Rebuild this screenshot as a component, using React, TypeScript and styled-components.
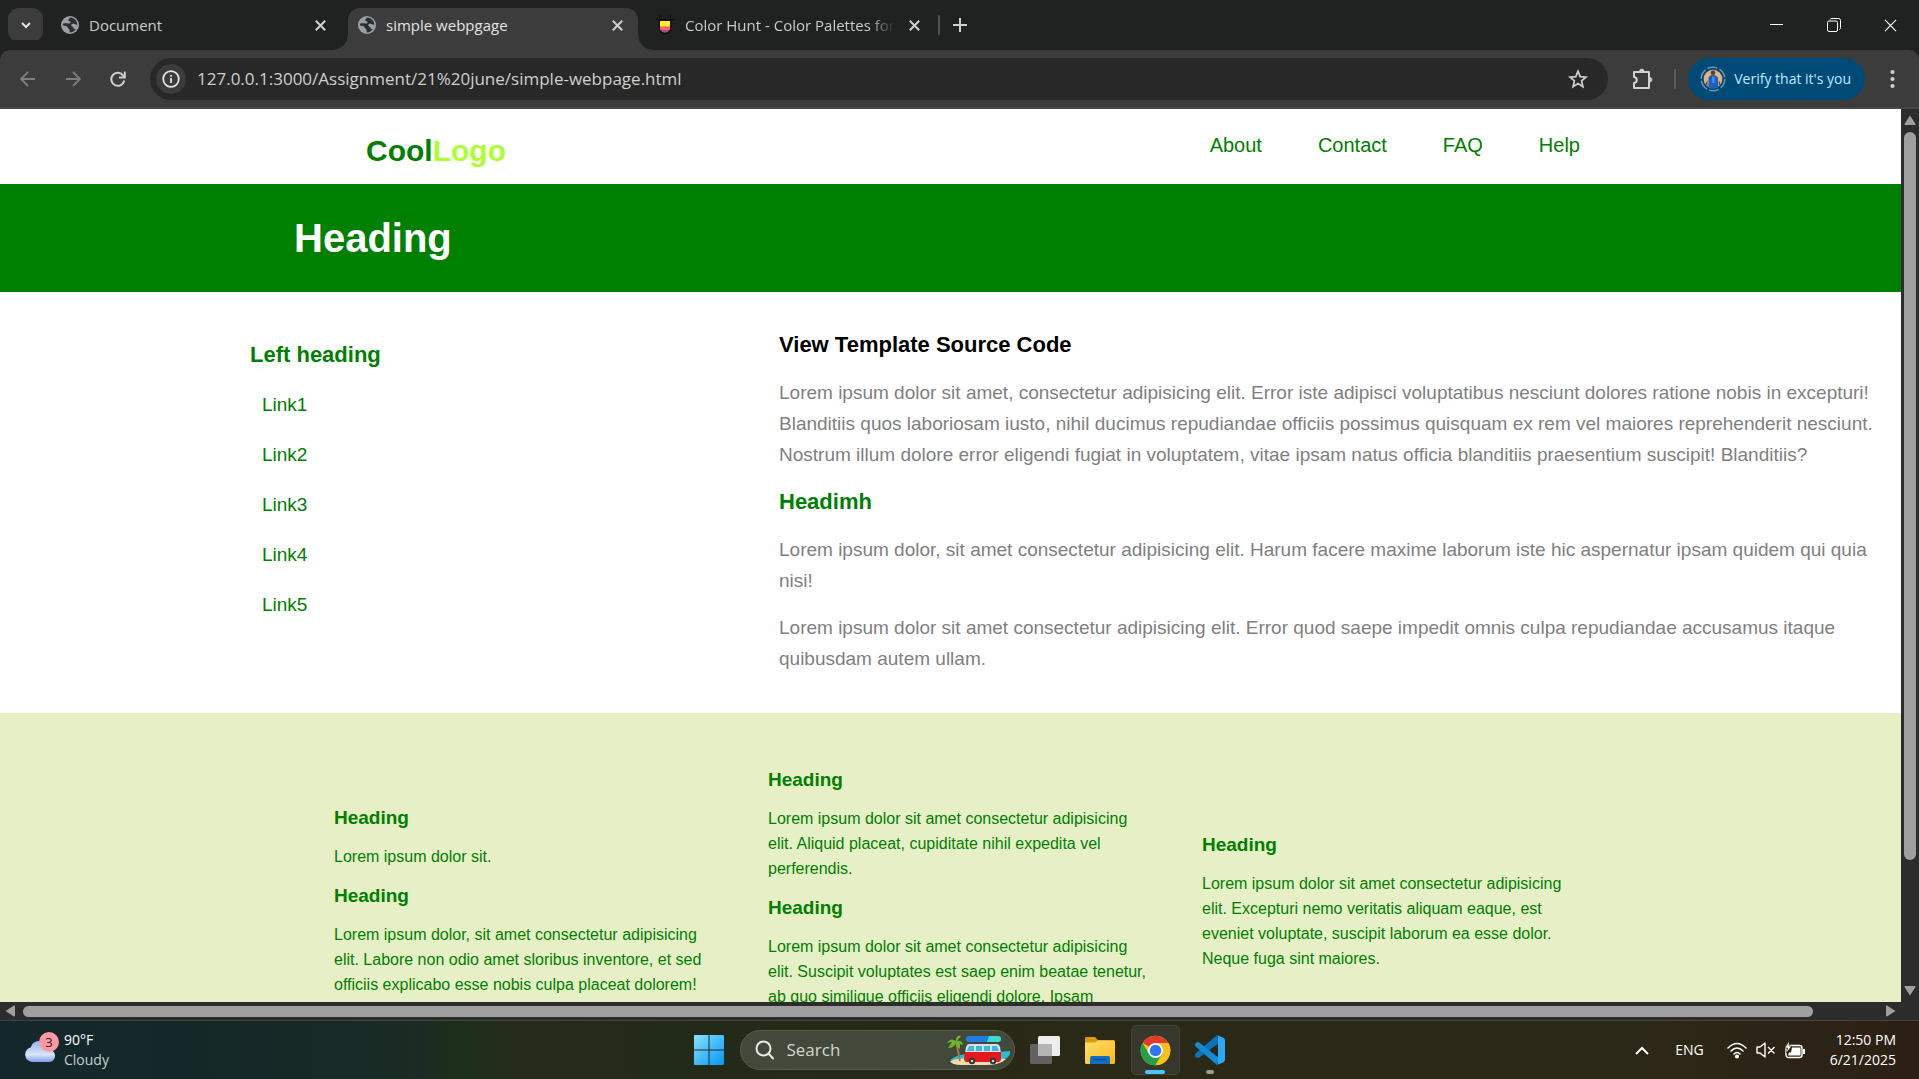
import React from 'react';
import styled, { createGlobalStyle } from 'styled-components';

const Global = createGlobalStyle`
  * { box-sizing: border-box; }
  body { margin: 0; overflow: hidden; font-family: 'Liberation Sans', Arial, sans-serif; }
  button { border: 0; padding: 0; background: none; color: inherit; font: inherit; }
  a { color: inherit; text-decoration: none; }
  h1, h2, h3, p, ul { margin: 0; padding: 0; }
  svg { display: block; flex: none; }
`;

const UI_FONT = "'Open Sans', 'Noto Sans', sans-serif";

const Shell = styled.div`
  display: flex;
  flex-direction: column;
  height: 100vh;
`;

const TabStrip = styled.header`
  display: flex;
  align-items: flex-end;
  flex: none;
  height: 50px;
  padding-left: 8px;
  background: #202222;
  color: #c9cbcb;
  font: 15px/20px ${UI_FONT};
`;

const TabSearch = styled.button`
  display: grid;
  place-items: center;
  width: 35px;
  height: 34px;
  margin-bottom: 8px;
  border-radius: 11px;
  background: #3c3c3c;
  color: #e6e6e6;
`;

const TabItem = styled.div<{ $active?: boolean; $width: number; $start: number; $end: number }>`
  position: relative;
  display: flex;
  align-items: center;
  gap: 10px;
  width: ${(p) => p.$width}px;
  height: 42px;
  padding: 0 ${(p) => p.$end}px 8px ${(p) => p.$start}px;
  border-radius: 12px 12px 0 0;
  background: ${(p) => (p.$active ? '#3c3c3c' : 'transparent')};
  color: ${(p) => (p.$active ? '#e3e3e3' : '#c9cbcb')};
  ${(p) =>
    p.$active &&
    `&::before, &::after {
      content: '';
      position: absolute;
      bottom: 0;
      width: 14px;
      height: 14px;
    }
    &::before { left: -14px; background: radial-gradient(circle at 0 0, #202222 13px, #3c3c3c 14px); }
    &::after { right: -14px; background: radial-gradient(circle at 100% 0, #202222 13px, #3c3c3c 14px); }`}
`;

const TabTitle = styled.span<{ $fade?: boolean }>`
  flex: 1;
  overflow: hidden;
  white-space: nowrap;
  ${(p) => p.$fade && 'mask-image: linear-gradient(90deg, #000 88%, transparent);'}
`;

const IconButton = styled.button<{ $size?: number; $dim?: boolean }>`
  display: grid;
  place-items: center;
  flex: none;
  width: ${(p) => p.$size ?? 20}px;
  height: ${(p) => p.$size ?? 20}px;
  color: ${(p) => (p.$dim ? '#7d7d7d' : '#d0d0d0')};
`;

const NewTab = styled.div`
  display: flex;
  align-items: center;
  gap: 10px;
  height: 34px;
  margin: 0 0 8px 2px;
`;

const Divider = styled.span`
  width: 2px;
  height: 20px;
  border-radius: 1px;
  background: #515353;
`;

const WindowControls = styled.div`
  display: flex;
  align-items: center;
  height: 50px;
  margin-left: auto;
`;

const WindowButton = styled.button`
  display: grid;
  place-items: center;
  width: 57px;
  height: 50px;
  color: #fff;
`;

const Toolbar = styled.div`
  display: flex;
  align-items: center;
  flex: none;
  height: 59px;
  padding: 0 17px 0 14px;
  border-bottom: 2px solid #484848;
  border-radius: 10px 10px 0 0;
  background: #3c3c3c;
  box-shadow: 0 -10px 0 #202222;
  color: #d0d0d0;
`;

const NavButtons = styled.div`
  display: flex;
  gap: 17px;
  margin-right: 18px;
`;

const Omnibox = styled.div`
  display: flex;
  align-items: center;
  flex: 1;
  height: 42px;
  padding: 0 16px 0 6px;
  border-radius: 21px;
  background: #282828;
`;

const SiteInfo = styled.button`
  display: grid;
  place-items: center;
  width: 30px;
  height: 30px;
  border-radius: 50%;
  background: #3c3c3c;
  color: #e3e3e3;
`;

const AddressInput = styled.input`
  flex: 1;
  height: 24px;
  margin-left: 11px;
  padding: 0;
  border: 0;
  outline: 0;
  background: transparent;
  color: #d0d0d0;
  font: 17px/24px ${UI_FONT};
`;

const ToolbarActions = styled.div`
  display: flex;
  align-items: center;
  margin-left: 24px;
`;

const ToolbarDivider = styled(Divider)`
  margin: 0 12px 0 20px;
  background: #5b5b5b;
`;

const ProfileChip = styled.button`
  display: flex;
  align-items: center;
  gap: 8px;
  height: 42px;
  margin-right: 17px;
  padding: 0 14px 0 12px;
  border-radius: 21px;
  background: #004a77;
  color: #c2e7ff;
  font: 14px/20px ${UI_FONT};
`;

const Viewport = styled.div`
  display: grid;
  grid-template: minmax(0, 1fr) 18px / minmax(0, 1fr) 18px;
  flex: 1;
  min-height: 0;
  background: #2c2c2c;
`;

const Page = styled.main`
  overflow: hidden;
  background: #fff;
  color: green;
`;

const VBar = styled.div`
  display: flex;
  flex-direction: column;
  align-items: center;
  padding: 5px 0;
`;

const VTrack = styled.div`
  flex: 1;
  width: 12px;
  margin: 6px 0;
`;

const VThumb = styled.div`
  height: 86%;
  border-radius: 6px;
  background: #9f9f9f;
`;

const HBar = styled.div`
  display: flex;
  align-items: center;
  padding: 0 4px;
`;

const HTrack = styled.div`
  flex: 1;
  height: 11px;
  margin: 0 7px;
  padding-right: 65px;
`;

const HThumb = styled.div`
  height: 11px;
  border-radius: 6px;
  background: #9f9f9f;
`;

const SiteHeader = styled.div`
  display: flex;
  justify-content: space-between;
  height: 75px;
  padding: 20px 321px 0 366px;
`;

const Logo = styled.a`
  padding-top: 4px;
  font-size: 30px;
  font-weight: 700;
  line-height: 36px;
`;

const LogoAccent = styled.span`
  color: greenyellow;
`;

const SiteNav = styled.nav`
  display: flex;
  gap: 56px;
  font-size: 20px;
  line-height: 32px;
`;

const Banner = styled.section`
  padding: 30px 294px;
  background: green;
  color: #fff;
`;

const BannerTitle = styled.h1`
  font-size: 40px;
  line-height: 48px;
`;

const Content = styled.section`
  display: grid;
  grid-template-columns: 529px minmax(0, 1fr);
  padding: 37px 24px 39px 250px;
`;

const SectionTitle = styled.h2<{ $dark?: boolean }>`
  color: ${(p) => (p.$dark ? '#000' : 'green')};
  font-size: 22px;
  line-height: 32px;
`;

const Sidebar = styled.aside`
  padding-top: 10px;
`;

const LinkList = styled.ul`
  padding: 9px 0 0 12px;
  list-style: none;
  font-size: 19px;
  line-height: 50px;
`;

const Article = styled.article`
  display: flex;
  flex-direction: column;
  gap: 16px;
  color: gray;
  font-size: 19px;
  line-height: 31px;
`;

const Footer = styled.footer`
  height: 400px;
  padding: 54px 334px;
  background: #e7efc7;
`;

const Columns = styled.div`
  display: grid;
  grid-template-columns: repeat(3, 387px);
  align-items: center;
  gap: 47px;
  min-height: 268px;
`;

const Column = styled.section<{ $start?: boolean }>`
  align-self: ${(p) => (p.$start ? 'start' : 'center')};
  font-size: 16px;
  line-height: 25px;
`;

const ColumnTitle = styled.h3`
  margin-bottom: 13px;
  font-size: 19px;
  line-height: 26px;

  p + & {
    margin-top: 14px;
  }
`;

const Taskbar = styled.footer`
  display: grid;
  grid-template-columns: 1fr auto 1fr;
  align-items: center;
  flex: none;
  height: 59px;
  border-top: 1px solid #45453f;
  background: linear-gradient(90deg, #14272c 0%, #172a27 18%, #1a2c22 22%, #1b2f1a 23.5%, #262b19 27%, #222a19 35%, #2a2817 55%, #2c2818 85%, #2c2014 100%);
  color: #fff;
  font: 14px/20px ${UI_FONT};
`;

const Weather = styled.button`
  display: flex;
  align-items: center;
  gap: 4px;
  padding-left: 24px;
  text-align: left;
`;

const Stack = styled.span<{ $end?: boolean }>`
  display: flex;
  flex-direction: column;
  align-items: ${(p) => (p.$end ? 'flex-end' : 'flex-start')};
`;

const Muted = styled.span`
  color: #c9cfce;
`;

const Apps = styled.div`
  display: flex;
  align-items: center;
  gap: 6px;
`;

const AppButton = styled.button<{ $active?: boolean }>`
  position: relative;
  display: grid;
  place-items: center;
  width: 49px;
  height: 50px;
  border: 1px solid ${(p) => (p.$active ? '#44433a' : 'transparent')};
  border-radius: 5px;
  background: ${(p) => (p.$active ? '#38372b' : 'transparent')};
`;

const Indicator = styled.span<{ $active?: boolean }>`
  position: absolute;
  bottom: 0;
  left: 50%;
  width: ${(p) => (p.$active ? 20 : 8)}px;
  height: 4px;
  border-radius: 2px;
  background: ${(p) => (p.$active ? '#4cc2ff' : '#9b9a94')};
  transform: translateX(-50%);
`;

const SearchBox = styled.label`
  display: flex;
  align-items: center;
  width: 275px;
  height: 40px;
  padding: 0 3px 0 14px;
  border: 1px solid #565d4b;
  border-radius: 20px;
  background: #42493a;
`;

const SearchInput = styled.input`
  flex: 1;
  min-width: 0;
  margin-left: 12px;
  padding: 0;
  border: 0;
  outline: 0;
  background: transparent;
  color: #fff;
  font: 17px/24px ${UI_FONT};

  &::placeholder {
    color: #d3d5d0;
    opacity: 1;
  }
`;

const Tray = styled.div`
  display: flex;
  align-items: center;
  justify-content: flex-end;
  gap: 9px;
  padding-right: 23px;
`;

const Lang = styled.span`
  margin: 0 14px 0 17px;
`;

const Clock = styled.span`
  margin-left: 15px;
`;

const Globe = () => (
  <svg width="18" height="18" viewBox="0 0 18 18">
    <circle cx="9" cy="9" r="9" fill="#9aa0a6" />
    <path d="M9.5 1.4C8 2.6 6.900 3.500 7.300 4.600c.4 1 2 .5 2.300 1.600.2 1-1 1.500-2.200 1.400-1.800-.2-3-.6-5.600.2.4 2.800 2 2 3.600 2.500 1.600.4 1 2 2.600 2.600.8.400.4 2 .8 3.600 2.600 0 5-1.500 6.300-3.400-1.500.2-2.500-.4-2.800-1.500-.3-1.200-2-1-2.100-2.300 0-1.500 1.500-1.600 2.600-1.600 1.700 0 2 1.500 3.600 1.100C16.400 5.300 13.500 1.800 9.500 1.400Z" fill="#2d2f2f" />
  </svg>
);

const Cross = ({ size = 11, width = 2 }: { size?: number; width?: number }) => (
  <svg width={size} height={size} viewBox="0 0 11 11" stroke="currentColor" strokeWidth={width} fill="none">
    <path d="M.8.8l9.400 9.400M10.200.8L.8 10.200" />
  </svg>
);

const ColorHunt = () => (
  <svg width="20" height="20" viewBox="0 0 20 20">
    <path d="M1 4.500h18" stroke="#111" strokeWidth="1.500" />
    <circle cx="5" cy="1.500" r="1.200" fill="#111" />
    <circle cx="15" cy="1.500" r="1.200" fill="#111" />
    <path d="M3.500 4h13v9a6.500 6.500 0 0 1-13 0Z" fill="#111" />
    <path d="M5 6h10v6H5Z" fill="#ffe82e" />
    <path d="M5 11.500h10V15H5Z" fill="#ff5d5d" />
    <path d="M5.500 15h9a5 5 0 0 1-9 0Z" fill="#a04f91" />
  </svg>
);

const Arrow = ({ flip }: { flip?: boolean }) => (
  <svg width="16" height="16" viewBox="0 0 16 16" fill="none" stroke="currentColor" strokeWidth="1.800">
    <path d={flip ? 'M1 8h14M8 1l7 7-7 7' : 'M15 8H1M8 1L1 8l7 7'} />
  </svg>
);

const Reload = () => (
  <svg width="16" height="16" viewBox="0 0 16 16" fill="none" stroke="currentColor" strokeWidth="2">
    <path d="M14.200 9.500a6.500 6.500 0 1 1-1.200-5.200L14.500 6M14.800.5v6H9" />
  </svg>
);

const Info = () => (
  <svg width="18" height="18" viewBox="0 0 18 18" fill="none" stroke="currentColor" strokeWidth="1.800">
    <circle cx="9" cy="9" r="7.800" />
    <path d="M9 8v5M9 5v1.800" />
  </svg>
);

const Star = () => (
  <svg width="20" height="20" viewBox="0 0 20 20" fill="none" stroke="currentColor" strokeWidth="1.700">
    <path d="M10 2.200l2.200 5.400 5.800.5-4.400 3.800 1.300 5.700-4.900-3-4.900 3 1.300-5.700L2 8.100l5.800-.5Z" />
  </svg>
);

const Puzzle = () => (
  <svg width="22" height="22" viewBox="0 0 22 22" fill="none" stroke="currentColor" strokeWidth="2" strokeLinejoin="round">
    <path d="M2 4h5.500h9.500v6.500v9.500H2v-5c3.800-.6 3.800-5.400 0-6Z" />
    <path d="M7.500 3.500a2.300 2.300 0 0 1 4.600 0ZM17.500 9.500a2.300 2.300 0 0 1 0 4.600Z" fill="currentColor" strokeWidth="1" />
  </svg>
);

const Avatar = () => (
  <svg width="26" height="26" viewBox="0 0 26 26">
    <circle cx="13" cy="13" r="11.800" fill="none" stroke="#6f93ab" strokeWidth="1.500" strokeDasharray="10 2.400" />
    <circle cx="13" cy="13" r="9.300" fill="#e6b27c" />
    <path d="M8.500 21V11.500l2.500-2.500h4l3 2.500V21l-3 1.300h-4Z" fill="#165fc4" />
    <path d="M12 9l1.300 3 1.200-3v8h-2Z" fill="#4f95e0" />
    <circle cx="13" cy="6.800" r="2.300" fill="#5d3b30" />
    <path d="M5.500 18l2-4v6.500ZM18.800 14l1.700 4-1.700 2Z" fill="#6a3b35" />
  </svg>
);

const Triangle = ({ turn }: { turn: number }) => (
  <svg width="12" height="12" viewBox="0 0 12 12">
    <path d="M6 1.500L11.500 10q.3 1-.7 1H1.200q-1 0-.7-1Z" fill="#9f9f9f" transform={`rotate(${turn} 6 6)`} />
  </svg>
);

const Cloud = () => (
  <svg width="36" height="38" viewBox="0 0 36 38">
    <defs>
      <linearGradient id="cloud" x1="0" y1="0" x2="0" y2="1">
        <stop offset="0" stopColor="#8fb2ef" />
        <stop offset=".65" stopColor="#d8e5fb" />
        <stop offset="1" stopColor="#7c9fe6" />
      </linearGradient>
    </defs>
    <path d="M8 31a7.500 7.500 0 0 1-1-14.800C8 10.500 15 8 20 11.500c3 2 4 5 4 7 10 .5 8.500 12.500 1 12.500Z" fill="url(#cloud)" />
    <circle cx="25" cy="11" r="10" fill="#ff99a4" />
    <text x="25" y="16" textAnchor="middle" fontFamily="Open Sans" fontSize="13" fill="#222">3</text>
  </svg>
);

const Windows = () => (
  <svg width="30" height="30" viewBox="0 0 30 30">
    <defs>
      <linearGradient id="win" x1="0" y1="0" x2="1" y2="1">
        <stop offset="0" stopColor="#86e3ff" />
        <stop offset="1" stopColor="#0695f6" />
      </linearGradient>
    </defs>
    <path d="M1 0h13.500v14.500H0V1Q0 0 1 0ZM15.500 0H29q1 0 1 1v13.500H15.500ZM0 15.500h14.500V30H1q-1 0-1-1ZM15.500 15.500H30V29q0 1-1 1H15.500Z" fill="url(#win)" />
  </svg>
);

const Magnifier = () => (
  <svg width="20" height="20" viewBox="0 0 20 20" fill="none" stroke="#e8e9e6" strokeWidth="2" strokeLinecap="round">
    <circle cx="8.500" cy="8.500" r="7" />
    <path d="M13.500 13.500l4.500 5" />
  </svg>
);

const BeachVan = () => (
  <svg width="64" height="32" viewBox="0 0 64 32">
    <path d="M3 26Q12 19 24 20l39-3q1 6-7 9L36 30Z" fill="#28bfd0" />
    <path d="M3 27q16-6 56-2-6 6-20 6H14Q5 31 3 27Z" fill="#f4dcae" />
    <path d="M9 8q2 8 4 19" stroke="#a6794b" strokeWidth="1.800" fill="none" />
    <path d="M9 7Q4 3 0 9l5-1-4 6q6 0 8-5 1 5 4 6l0-5 3 1q-1-5-6-4l4-5q-5-1-5 5Z" fill="#6cb52d" />
    <rect x="19" y="2" width="35" height="6" rx="3" fill="#1f7fe0" />
    <path d="M42 2h9q3 0 3 3t-3 3H40Z" fill="#3fd9cf" />
    <path d="M22 10h28q2 0 3 3l1 6H18l1-6q1-3 3-3Z" fill="#dcdde0" />
    <path d="M22 12h5v5h-7ZM29 12h6v5h-6ZM37 12h6v5h-6ZM45 12h5l2 5h-7Z" fill="#3db7df" />
    <path d="M18 18h36v7q0 3-3 3H20q-3 0-3-3Z" fill="#e3191d" />
    <circle cx="25" cy="27" r="3.200" fill="#333" />
    <circle cx="46" cy="27" r="3.200" fill="#333" />
    <circle cx="25" cy="27" r="1.300" fill="#ccc" />
    <circle cx="46" cy="27" r="1.300" fill="#ccc" />
  </svg>
);

const TaskView = () => (
  <svg width="30" height="28" viewBox="0 0 30 28">
    <rect x="8" y="0" width="22" height="20" rx="1.500" fill="#ededed" />
    <rect x="0" y="8" width="22" height="20" rx="1.500" fill="#616161" />
    <rect x="8" y="8" width="14" height="12" fill="#b5b5b5" />
  </svg>
);

const Folder = () => (
  <svg width="30" height="27" viewBox="0 0 30 27">
    <defs>
      <linearGradient id="folder" x1="0" y1="0" x2="1" y2="1">
        <stop offset="0" stopColor="#ffdf75" />
        <stop offset="1" stopColor="#fcb813" />
      </linearGradient>
    </defs>
    <path d="M0 1.500Q0 0 1.500 0H10l3 3h15.500Q30 3 30 4.500V8H0Z" fill="#dc9a06" />
    <path d="M0 5.500h10l3-2h15.500Q30 3.500 30 5v20.500q0 1.500-1.500 1.500h-27Q0 27 0 25.500Z" fill="url(#folder)" />
    <path d="M5 27v-6q0-2 2-2h16q2 0 2 2v6Z" fill="#0f6fc6" />
    <path d="M8.500 22.500h13" stroke="#084f94" strokeWidth="1.500" />
  </svg>
);

const Chrome = () => (
  <svg width="31" height="31" viewBox="0 0 48 48">
    <circle cx="24" cy="24" r="23" fill="#fbc116" />
    <path d="M24 24L4.080 12.500A23 23 0 0 1 43.900 12.500H24Z" fill="#e33b2e" />
    <path d="M4.080 12.500A23 23 0 0 0 24 47l10-17.300L24 24l-10 5.700Z" fill="#22a04c" />
    <path d="M24 47l10-17.300L35 24V12.500h8.900A23 23 0 0 1 24 47Z" fill="#fbc116" />
    <circle cx="24" cy="24" r="11.500" fill="#fff" />
    <circle cx="24" cy="24" r="9" fill="#2b78ee" />
  </svg>
);

const Code = () => (
  <svg width="30" height="30" viewBox="0 0 30 30">
    <path d="M22 0L0 19v2l2 2 2-.2L24 8Z" fill="#0b72b8" />
    <path d="M0 9l2-2 2 .2L24 23l-2 7L0 11Z" fill="#118bd6" />
    <path d="M22 0l7 3 1 2v20l-1 2-7 3q1-.7 1-2V2q0-1.300-1-2Z" fill="#2ba9f5" />
  </svg>
);

const Chevron = ({ up }: { up?: boolean }) => (
  <svg width="14" height="9" viewBox="0 0 14 9" fill="none" stroke="currentColor" strokeWidth="2">
    <path d={up ? 'M1 8l6-6 6 6' : 'M3 2l4 4 4-4'} />
  </svg>
);

const Wifi = () => (
  <svg width="20" height="17" viewBox="0 0 20 17" fill="none" stroke="#fff" strokeWidth="1.600" strokeLinecap="round">
    <path d="M1 6Q10-3 19 6M4 9q6-6 12 0M7 12q3-3 6 0" />
    <circle cx="10" cy="14.500" r="1.300" fill="#fff" />
  </svg>
);

const Mute = () => (
  <svg width="20" height="16" viewBox="0 0 20 16" fill="none" stroke="#fff" strokeWidth="1.400" strokeLinejoin="round">
    <path d="M1 5h3l5-4v14l-5-4H1ZM12 5l6.500 6.500M18.500 5L12 11.500" />
  </svg>
);

const Battery = () => (
  <svg width="21" height="18" viewBox="0 0 21 18">
    <rect x="1" y="4.500" width="16" height="12" rx="2.500" fill="none" stroke="#fff" strokeWidth="1.400" />
    <path d="M7 6.500h8.500v8H3l1-3h2ZM18 8h2v5h-2Z" fill="#fff" />
    <path d="M4 0L0 7h2.500L1.500 12l5-7H4Z" fill="#fff" stroke="#2c2618" strokeWidth=".6" />
  </svg>
);

const Tabs = () => (
  <TabStrip>
    <TabSearch aria-label="Search tabs"><Chevron /></TabSearch>
    <TabItem $width={305} $start={18} $end={18}>
      <Globe />
      <TabTitle>Document</TabTitle>
      <IconButton aria-label="Close Document"><Cross /></IconButton>
    </TabItem>
    <TabItem $width={290} $start={10} $end={11} $active>
      <Globe />
      <TabTitle>simple webpgage</TabTitle>
      <IconButton aria-label="Close simple webpgage"><Cross /></IconButton>
    </TabItem>
    <TabItem $width={298} $start={17} $end={12}>
      <ColorHunt />
      <TabTitle $fade>Color Hunt - Color Palettes for Designers</TabTitle>
      <IconButton aria-label="Close Color Hunt"><Cross /></IconButton>
    </TabItem>
    <NewTab>
      <Divider />
      <IconButton aria-label="New tab">
        <svg width="14" height="14" viewBox="0 0 14 14" stroke="currentColor" strokeWidth="2"><path d="M7 0v14M0 7h14" /></svg>
      </IconButton>
    </NewTab>
    <WindowControls>
      <WindowButton aria-label="Minimize">
        <svg width="13" height="13" viewBox="0 0 13 13" stroke="currentColor"><path d="M0 5.500h13" /></svg>
      </WindowButton>
      <WindowButton aria-label="Restore">
        <svg width="14" height="14" viewBox="0 0 14 14" fill="none" stroke="currentColor">
          <rect x=".5" y="3" width="10" height="10.500" rx="1.500" />
          <path d="M3 1.500Q3.500.5 5 .5h6.500q2 0 2 2V9.500q0 1.500-1 2" />
        </svg>
      </WindowButton>
      <WindowButton aria-label="Close"><Cross size={13} width={1} /></WindowButton>
    </WindowControls>
  </TabStrip>
);

const links = ['Link1', 'Link2', 'Link3', 'Link4', 'Link5'];
const nav = ['About', 'Contact', 'FAQ', 'Help'];

const WebPage = () => (
  <Page>
    <SiteHeader>
      <Logo href="#">Cool<LogoAccent>Logo</LogoAccent></Logo>
      <SiteNav>{nav.map((n) => <a key={n} href="#">{n}</a>)}</SiteNav>
    </SiteHeader>
    <Banner><BannerTitle>Heading</BannerTitle></Banner>
    <Content>
      <Sidebar>
        <SectionTitle>Left heading</SectionTitle>
        <LinkList>{links.map((l) => <li key={l}><a href="#">{l}</a></li>)}</LinkList>
      </Sidebar>
      <Article>
        <SectionTitle $dark>View Template Source Code</SectionTitle>
        <p>Lorem ipsum dolor sit amet, consectetur adipisicing elit. Error iste adipisci voluptatibus nesciunt dolores ratione nobis in excepturi! Blanditiis quos laboriosam iusto, nihil ducimus repudiandae officiis possimus quisquam ex rem vel maiores reprehenderit nesciunt. Nostrum illum dolore error eligendi fugiat in voluptatem, vitae ipsam natus officia blanditiis praesentium suscipit! Blanditiis?</p>
        <SectionTitle>Headimh</SectionTitle>
        <p>Lorem ipsum dolor, sit amet consectetur adipisicing elit. Harum facere maxime laborum iste hic aspernatur ipsam quidem qui quia nisi!</p>
        <p>Lorem ipsum dolor sit amet consectetur adipisicing elit. Error quod saepe impedit omnis culpa repudiandae accusamus itaque quibusdam autem ullam.</p>
      </Article>
    </Content>
    <Footer>
      <Columns>
        <Column>
          <ColumnTitle>Heading</ColumnTitle>
          <p>Lorem ipsum dolor sit.</p>
          <ColumnTitle>Heading</ColumnTitle>
          <p>Lorem ipsum dolor, sit amet consectetur adipisicing elit. Labore non odio amet sloribus inventore, et sed officiis explicabo esse nobis culpa placeat dolorem!</p>
        </Column>
        <Column $start>
          <ColumnTitle>Heading</ColumnTitle>
          <p>Lorem ipsum dolor sit amet consectetur adipisicing elit. Aliquid placeat, cupiditate nihil expedita vel perferendis.</p>
          <ColumnTitle>Heading</ColumnTitle>
          <p>Lorem ipsum dolor sit amet consectetur adipisicing elit. Suscipit voluptates est saep enim beatae tenetur, ab quo similique officiis eligendi dolore. Ipsam</p>
        </Column>
        <Column>
          <ColumnTitle>Heading</ColumnTitle>
          <p>Lorem ipsum dolor sit amet consectetur adipisicing elit. Excepturi nemo veritatis aliquam eaque, est eveniet voluptate, suscipit laborum ea esse dolor. Neque fuga sint maiores.</p>
        </Column>
      </Columns>
    </Footer>
  </Page>
);

export default function App() {
  return (
    <Shell>
      <Global />
      <Tabs />
      <Toolbar>
        <NavButtons>
          <IconButton $size={28} $dim aria-label="Back"><Arrow /></IconButton>
          <IconButton $size={28} $dim aria-label="Forward"><Arrow flip /></IconButton>
          <IconButton $size={28} aria-label="Reload"><Reload /></IconButton>
        </NavButtons>
        <Omnibox>
          <SiteInfo aria-label="Site information"><Info /></SiteInfo>
          <AddressInput aria-label="Address" defaultValue="127.0.0.1:3000/Assignment/21%20june/simple-webpage.html" />
          <IconButton $size={28} aria-label="Bookmark"><Star /></IconButton>
        </Omnibox>
        <ToolbarActions>
          <IconButton $size={22} aria-label="Extensions"><Puzzle /></IconButton>
          <ToolbarDivider />
          <ProfileChip><Avatar />Verify that it's you</ProfileChip>
          <IconButton aria-label="Menu">
            <svg width="5" height="20" viewBox="0 0 5 20" fill="currentColor">
              <circle cx="2.500" cy="3" r="2.100" /><circle cx="2.500" cy="10" r="2.100" /><circle cx="2.500" cy="17" r="2.100" />
            </svg>
          </IconButton>
        </ToolbarActions>
      </Toolbar>
      <Viewport>
        <WebPage />
        <VBar><Triangle turn={0} /><VTrack><VThumb /></VTrack><Triangle turn={180} /></VBar>
        <HBar><Triangle turn={-90} /><HTrack><HThumb /></HTrack><Triangle turn={90} /></HBar>
      </Viewport>
      <Taskbar>
        <Weather>
          <Cloud />
          <Stack><span>90°F</span><Muted>Cloudy</Muted></Stack>
        </Weather>
        <Apps>
          <AppButton aria-label="Start"><Windows /></AppButton>
          <SearchBox>
            <Magnifier />
            <SearchInput aria-label="Search" placeholder="Search" />
            <BeachVan />
          </SearchBox>
          <AppButton aria-label="Task view"><TaskView /></AppButton>
          <AppButton aria-label="File Explorer"><Folder /></AppButton>
          <AppButton aria-label="Chrome" $active><Chrome /><Indicator $active /></AppButton>
          <AppButton aria-label="Visual Studio Code"><Code /><Indicator /></AppButton>
        </Apps>
        <Tray>
          <Chevron up />
          <Lang>ENG</Lang>
          <Wifi />
          <Mute />
          <Battery />
          <Clock><Stack $end><span>12:50 PM</span><span>6/21/2025</span></Stack></Clock>
        </Tray>
      </Taskbar>
    </Shell>
  );
}
